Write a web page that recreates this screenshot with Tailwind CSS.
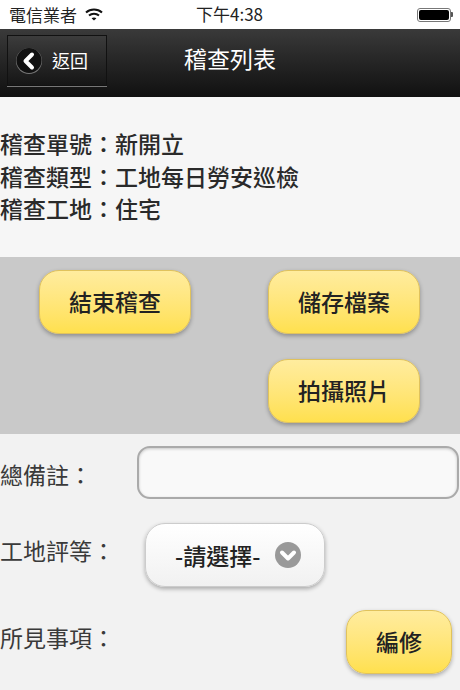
<!DOCTYPE html>
<html lang="zh-Hant">
<head>
  <meta charset="UTF-8" />
  <meta name="viewport" content="width=device-width, initial-scale=1.0" />
  <title>稽查列表</title>
  <script src="https://cdn.jsdelivr.net/npm/@tailwindcss/browser@4"></script>
</head>
<body class="w-[460px] h-[690px] overflow-hidden bg-[#f2f2f2] font-['Noto_Sans_CJK_TC','Noto_Sans',sans-serif] text-[#222]">

  <!-- status bar -->
  <div class="h-[29px] bg-white flex items-center justify-between pl-[9px] pr-[7px] text-[17px] text-[#222] relative">
    <div class="flex items-center gap-[8px]">
      <span>電信業者</span>
      <svg width="18" height="13" viewBox="0 0 18 13" fill="none" stroke="#111" stroke-width="2">
        <path d="M1 4.5C5.5 0.5 12.5 0.5 17 4.5" />
        <path d="M4 7.6C6.8 5.2 11.2 5.2 14 7.6" />
        <path d="M9 12.5L6.6 10.2C7.9 9.1 10.1 9.1 11.4 10.2Z" fill="#111" stroke="none" />
      </svg>
    </div>
    <span class="absolute left-[196px] top-[1px] text-[17px]">下午4:38</span>
    <div class="flex items-center">
      <div class="w-[34px] h-[14px] rounded-[3px] border border-[#777] p-[1px]"><div class="w-full h-full bg-black rounded-[2px]"></div></div>
      <div class="w-[2px] h-[5px] bg-[#555] rounded-r-[1px]"></div>
    </div>
  </div>

  <!-- nav bar -->
  <div class="h-[68px] bg-gradient-to-b from-[#3a3a3a] to-[#111] flex items-center pl-[7px] relative">
    <div class="w-[100px] h-[51px] mb-[6px] border border-[#111] bg-gradient-to-b from-[#3c3c3c] to-[#161616] shadow-[0_1px_0_#777] flex items-center pl-[8px] gap-[10px]">
      <svg width="26" height="26" viewBox="0 0 26 26" class="mt-[2px]">
        <circle cx="13" cy="13" r="13" fill="#777" />
        <circle cx="13" cy="12.5" r="12.5" fill="#111" />
        <path d="M16 6.5L9.5 13L16 19.5" fill="none" stroke="#fff" stroke-width="4" stroke-linejoin="round" stroke-linecap="round" />
      </svg>
      <span class="text-[18px] text-white mt-[1px]">返回</span>
    </div>
    <span class="absolute left-[184px] top-[12px] text-[23px] text-white">稽查列表</span>
  </div>

  <!-- info -->
  <div class="h-[160px] bg-[#f6f6f6] pt-[30px] text-[23px] font-medium leading-[32.5px] text-[#2a2a2a]">
    <p>稽查單號：新開立</p>
    <p>稽查類型：工地每日勞安巡檢</p>
    <p>稽查工地：住宅</p>
  </div>

  <!-- action buttons -->
  <div class="h-[177px] bg-[#c9c9c9] pt-[13px] pl-[39px] grid grid-cols-[152px_152px] gap-x-[77px] gap-y-[25px] content-start">
    <button class="h-[64px] pb-[2px] rounded-[20px] border border-[#e0c25c] bg-gradient-to-b from-[#ffec9e] to-[#ffe04d] shadow-[0_2px_4px_rgba(0,0,0,0.3)] text-[23px] font-medium">結束稽查</button>
    <button class="h-[64px] pb-[2px] rounded-[20px] border border-[#e0c25c] bg-gradient-to-b from-[#ffec9e] to-[#ffe04d] shadow-[0_2px_4px_rgba(0,0,0,0.3)] text-[23px] font-medium">儲存檔案</button>
    <div></div>
    <button class="h-[64px] pb-[2px] rounded-[20px] border border-[#e0c25c] bg-gradient-to-b from-[#ffec9e] to-[#ffe04d] shadow-[0_2px_4px_rgba(0,0,0,0.3)] text-[23px] font-medium">拍攝照片</button>
  </div>

  <!-- form -->
  <div class="pt-[12px] text-[23px] text-[#3a3a3a]">
    <div class="flex items-center h-[53px]">
      <span class="w-[137px] mt-[3px]">總備註：</span>
      <div class="w-[322px] h-[53px] rounded-[13px] border-2 border-[#aaa] bg-[#f9f9f9] shadow-[inset_0_1px_3px_rgba(0,0,0,0.2)]"></div>
    </div>
    <div class="flex items-center h-[64px] mt-[24px]">
      <span class="w-[145px] -mt-[9px]">工地評等：</span>
      <div class="w-[180px] h-[64px] rounded-[20px] border border-[#ccc] bg-gradient-to-b from-white to-[#f1f1f1] shadow-[0_2px_4px_rgba(0,0,0,0.3)] flex items-center pl-[29px] gap-[15px] font-medium text-[#222]">
        <span>-請選擇-</span>
        <svg width="26" height="26" viewBox="0 0 26 26">
          <circle cx="13" cy="13" r="13" fill="#999" />
          <path d="M7 10.5L13 16.5L19 10.5" fill="none" stroke="#fff" stroke-width="4" stroke-linejoin="round" stroke-linecap="round" />
        </svg>
      </div>
    </div>
    <div class="flex items-center h-[64px] mt-[23px]">
      <span class="w-[346px] -mt-[9px]">所見事項：</span>
      <button class="w-[106px] h-[64px] pb-[2px] rounded-[20px] border border-[#e0c25c] bg-gradient-to-b from-[#ffec9e] to-[#ffe04d] shadow-[0_2px_4px_rgba(0,0,0,0.3)] font-medium text-[#222]">編修</button>
    </div>
  </div>

</body>
</html>
